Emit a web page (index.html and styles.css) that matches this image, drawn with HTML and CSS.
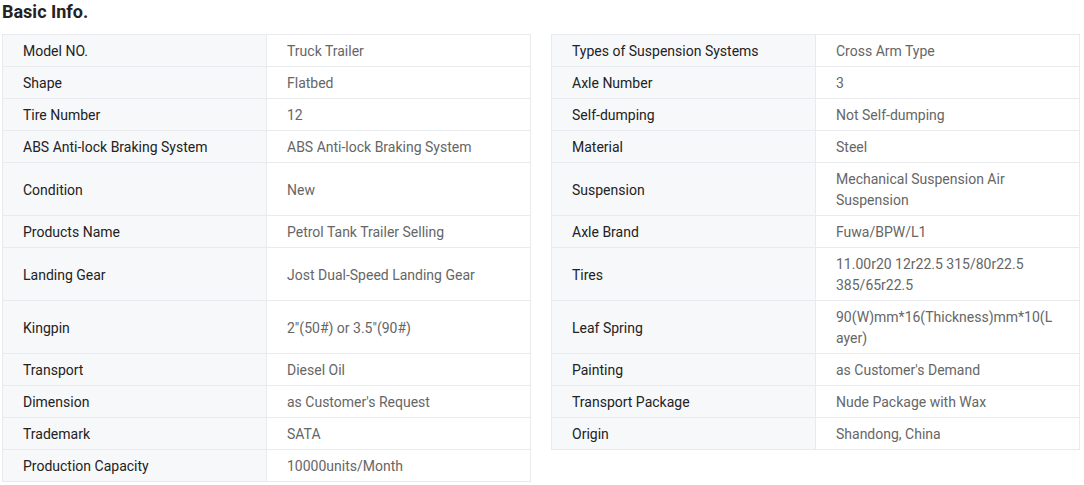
FILE: index.html
```html
<!DOCTYPE html>
<html>
<head>
<meta charset="utf-8">
<link rel="stylesheet" href="styles.css">
</head>
<body>
<h2 class="title">Basic Info.</h2>
<div class="specs">
  <div class="item"><div class="label">Model NO.</div><div class="value">Truck Trailer</div></div>
  <div class="item"><div class="label">Types of Suspension Systems</div><div class="value">Cross Arm Type</div></div>
  <div class="item"><div class="label">Shape</div><div class="value">Flatbed</div></div>
  <div class="item"><div class="label">Axle Number</div><div class="value">3</div></div>
  <div class="item"><div class="label">Tire Number</div><div class="value">12</div></div>
  <div class="item"><div class="label">Self-dumping</div><div class="value">Not Self-dumping</div></div>
  <div class="item"><div class="label">ABS Anti-lock Braking System</div><div class="value">ABS Anti-lock Braking System</div></div>
  <div class="item"><div class="label">Material</div><div class="value">Steel</div></div>
  <div class="item"><div class="label">Condition</div><div class="value">New</div></div>
  <div class="item"><div class="label">Suspension</div><div class="value">Mechanical Suspension Air Suspension</div></div>
  <div class="item"><div class="label">Products Name</div><div class="value">Petrol Tank Trailer Selling</div></div>
  <div class="item"><div class="label">Axle Brand</div><div class="value">Fuwa/BPW/L1</div></div>
  <div class="item"><div class="label">Landing Gear</div><div class="value">Jost Dual-Speed Landing Gear</div></div>
  <div class="item"><div class="label">Tires</div><div class="value">11.00r20 12r22.5 315/80r22.5 385/65r22.5</div></div>
  <div class="item"><div class="label">Kingpin</div><div class="value">2"(50#) or 3.5"(90#)</div></div>
  <div class="item"><div class="label">Leaf Spring</div><div class="value break">90(W)mm*16(Thickness)mm*10(Layer)</div></div>
  <div class="item"><div class="label">Transport</div><div class="value">Diesel Oil</div></div>
  <div class="item"><div class="label">Painting</div><div class="value">as Customer's Demand</div></div>
  <div class="item"><div class="label">Dimension</div><div class="value">as Customer's Request</div></div>
  <div class="item"><div class="label">Transport Package</div><div class="value">Nude Package with Wax</div></div>
  <div class="item"><div class="label">Trademark</div><div class="value">SATA</div></div>
  <div class="item"><div class="label">Origin</div><div class="value">Shandong, China</div></div>
  <div class="item"><div class="label">Production Capacity</div><div class="value">10000units/Month</div></div>
</div>
</body>
</html>
```

FILE: styles.css
```css
html, body {
  margin: 0;
  padding: 0;
  background: #fff;
}
body {
  font-family: Roboto, "Liberation Sans", Arial, sans-serif;
  font-size: 14px;
  padding: 0 2px;
}
.title {
  margin: 0;
  padding-top: 1px;
  height: 33px;
  font-size: 18px;
  font-weight: 700;
  line-height: 22px;
  color: #222;
}
.specs {
  display: grid;
  grid-template-columns: 529px 529px;
  column-gap: 20px;
  align-items: stretch;
}
.item {
  display: grid;
  grid-template-columns: 264px 1fr;
  border: 1px solid #e8eaee;
  border-top: none;
}
.item:nth-child(1), .item:nth-child(2) {
  border-top: 1px solid #e8eaee;
}
.label {
  background: #f7f8fa;
  border-right: 1px solid #e8eaee;
  color: #222;
  padding: 6px 20px 4px;
  line-height: 21px;
  display: flex;
  align-items: center;
}
.value {
  color: #666;
  padding: 6px 20px 4px;
  line-height: 21px;
  display: flex;
  align-items: center;
}
.break {
  word-break: break-all;
}
```
